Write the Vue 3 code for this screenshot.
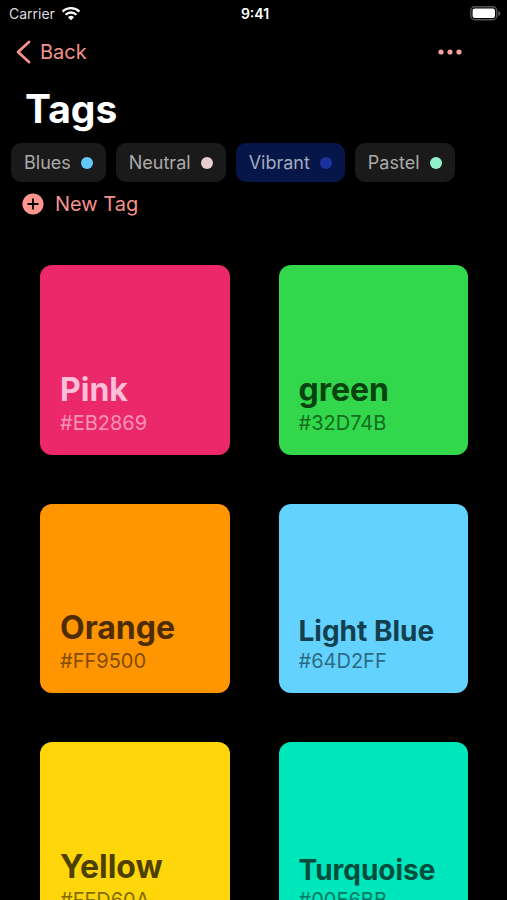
<template>
  <div class="screen">
    <header class="status-bar">
      <div class="carrier">
        <span>Carrier</span>
        <svg class="wifi" viewBox="0 0 20 15" aria-hidden="true">
          <path d="M1.6 5.6a12 12 0 0 1 16.8 0" />
          <path d="M4.6 8.7a7.7 7.7 0 0 1 10.8 0" />
          <path class="wifi-dot" d="M7 11.3a4.3 4.3 0 0 1 6 0L10 14.3z" />
        </svg>
      </div>
      <time class="clock">9:41</time>
      <svg class="battery" viewBox="0 0 31 15" aria-hidden="true">
        <rect x="0.8" y="0.8" width="26" height="13" rx="4" fill="none" stroke="#555" stroke-width="1.4" />
        <rect x="2.6" y="2.6" width="22.4" height="9.4" rx="2" fill="#fff" />
        <path d="M28.4 5v5q1.8-.8 1.8-2.5T28.4 5z" fill="#666" />
      </svg>
    </header>

    <nav class="nav-bar">
      <a href="#" class="back">
        <svg viewBox="0 0 16 24" aria-hidden="true">
          <path d="M14 2 3 12l11 10" />
        </svg>
        <span>Back</span>
      </a>
      <button type="button" class="more" aria-label="More">
        <svg viewBox="0 0 24 6" aria-hidden="true">
          <circle cx="3" cy="3" r="2.6" />
          <circle cx="12" cy="3" r="2.6" />
          <circle cx="21" cy="3" r="2.6" />
        </svg>
      </button>
    </nav>

    <h1 class="title">Tags</h1>

    <div class="tags">
      <button
        v-for="tag in tags"
        :key="tag.name"
        type="button"
        class="tag"
        :class="{ active: tag.name === selected }"
        @click="selected = tag.name"
      >
        <span>{{ tag.name }}</span>
        <span class="dot" :style="{ background: tag.color }"></span>
      </button>
    </div>

    <button type="button" class="new-tag">
      <svg viewBox="0 0 22 22" aria-hidden="true">
        <circle cx="11" cy="11" r="10.6" />
        <path d="M11 6.2v9.6M6.2 11h9.6" />
      </svg>
      <span>New Tag</span>
    </button>

    <main class="grid">
      <article
        v-for="item in colors"
        :key="item.hex"
        class="card"
        :style="{ background: item.hex, color: item.text }"
      >
        <h2 :class="{ small: item.name.length > 7 }">{{ item.name }}</h2>
        <p>{{ item.hex }}</p>
      </article>
    </main>
  </div>
</template>

<script setup>
import { ref } from 'vue';

const selected = ref('Vibrant');

const tags = [
  { name: 'Blues', color: '#64c8ff' },
  { name: 'Neutral', color: '#e6cdd0' },
  { name: 'Vibrant', color: '#1c319f' },
  { name: 'Pastel', color: '#90f2cd' },
];

const colors = [
  { name: 'Pink', hex: '#EB2869', text: '#ffbfd8' },
  { name: 'green', hex: '#32D74B', text: '#08420f' },
  { name: 'Orange', hex: '#FF9500', text: '#4d2d00' },
  { name: 'Light Blue', hex: '#64D2FF', text: '#12404f' },
  { name: 'Yellow', hex: '#FFD60A', text: '#4d4000' },
  { name: 'Turquoise', hex: '#00E6BB', text: '#004d3e' },
];
</script>

<style>
body {
  background: #000;
}
</style>

<style scoped>
.screen {
  height: 100vh;
  overflow-y: auto;
  scrollbar-width: none;
  background: #000;
  color: #fff;
  font-family: Inter, "Liberation Sans", sans-serif;
}

button {
  border: 0;
  padding: 0;
  background: none;
  font-family: inherit;
  cursor: pointer;
}

.status-bar {
  display: grid;
  grid-template-columns: 1fr auto 1fr;
  align-items: center;
  height: 27px;
  padding: 0 6px 0 9px;
  font-size: 14px;
}

.carrier {
  display: flex;
  align-items: center;
  gap: 6px;
  color: #ddd;
}

.wifi {
  width: 20px;
  height: 15px;
  fill: none;
  stroke: #fff;
  stroke-width: 2.3;
}

.wifi .wifi-dot {
  fill: #fff;
  stroke: none;
}

.clock {
  font-weight: 600;
}

.battery {
  justify-self: end;
  width: 31px;
  height: 15px;
}

.nav-bar {
  display: flex;
  align-items: center;
  justify-content: space-between;
  height: 50px;
  padding: 0 45px 0 15px;
}

.back {
  display: flex;
  align-items: center;
  gap: 9px;
  color: #f4928c;
  font-size: 20px;
  text-decoration: none;
}

.back svg {
  width: 16px;
  height: 24px;
  fill: none;
  stroke: #f4928c;
  stroke-width: 2.8;
  stroke-linecap: round;
  stroke-linejoin: round;
}

.more svg {
  display: block;
  width: 24px;
  height: 6px;
  fill: #f4a09b;
}

.title {
  margin: 0;
  padding: 8px 25px 10px;
  font-size: 39px;
  font-weight: 700;
  line-height: 48px;
}

.tags {
  display: flex;
  gap: 10px;
  padding: 0 11px;
}

.tag {
  display: flex;
  align-items: center;
  gap: 10px;
  height: 39px;
  padding: 0 13px;
  border-radius: 10px;
  background: #1a1a1a;
  color: #aaa;
  font-size: 18px;
}

.tag.active {
  background: #071648;
  color: #a2a9c0;
}

.dot {
  width: 12px;
  height: 12px;
  border-radius: 50%;
}

.new-tag {
  display: flex;
  align-items: center;
  gap: 11px;
  height: 44px;
  margin-left: 22px;
  color: #f4928c;
  font-size: 20px;
}

.new-tag svg {
  width: 22px;
  height: 22px;
  fill: #ff9690;
}

.new-tag path {
  stroke: #000;
  stroke-width: 1.8;
  stroke-linecap: round;
}

.grid {
  display: grid;
  grid-template-columns: 1fr 1fr;
  gap: 49px;
  padding: 39px 39px 49px 40px;
}

.card {
  display: flex;
  flex-direction: column;
  justify-content: flex-end;
  gap: 1px;
  box-sizing: border-box;
  aspect-ratio: 1;
  padding: 20px;
  border-radius: 12px;
}

.card h2 {
  margin: 0;
  font-size: 32px;
  font-weight: 700;
  line-height: 40px;
  white-space: nowrap;
}

.card h2.small {
  font-size: 28px;
  line-height: 34px;
}

.card p {
  margin: 0;
  font-size: 20px;
  line-height: 24px;
  opacity: 0.7;
}
</style>
